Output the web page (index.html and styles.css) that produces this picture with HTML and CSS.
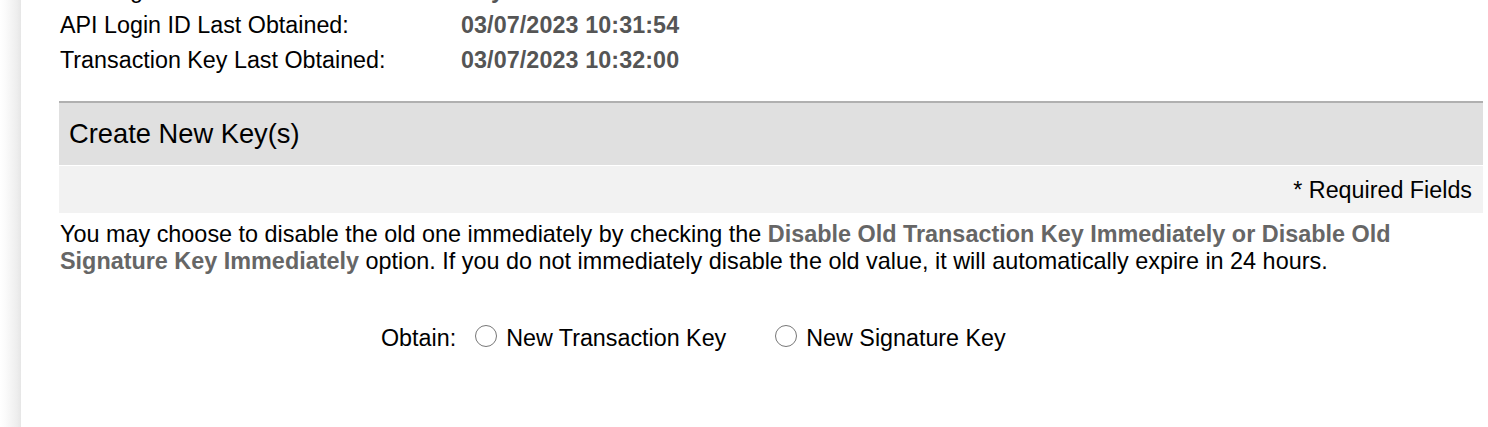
FILE: index.html
```html
<!DOCTYPE html>
<html>
<head>
<meta charset="utf-8">
<link rel="stylesheet" href="styles.css">
</head>
<body>
<div class="page">
  <div class="rail"></div>
  <div class="main">
    <div class="info">
      <div class="label">API Login ID:</div><div class="value">5Ky4Rm8T</div>
      <div class="label">API Login ID Last Obtained:</div><div class="value">03/07/2023 10:31:54</div>
      <div class="label">Transaction Key Last Obtained:</div><div class="value">03/07/2023 10:32:00</div>
    </div>
    <div class="section-head">Create New Key(s)</div>
    <div class="required">* Required Fields</div>
    <p class="note">You may choose to disable the old one immediately by checking the <b>Disable Old Transaction Key Immediately or Disable Old Signature Key Immediately</b> option. If you do not immediately disable the old value, it will automatically expire in 24 hours.</p>
    <div class="obtain">
      <span class="obtain-label">Obtain:</span>
      <label class="opt"><input type="radio" name="obtain" class="radio"><span>New Transaction Key</span></label>
      <label class="opt"><input type="radio" name="obtain" class="radio"><span>New Signature Key</span></label>
    </div>
  </div>
</div>
</body>
</html>
```

FILE: styles.css
```css
html, body {
  margin: 0;
  padding: 0;
  background: #fff;
  overflow: hidden;
}
body {
  font-family: "Liberation Sans", Arial, sans-serif;
  font-size: 23.3px;
  color: #000;
}
.page {
  display: flex;
  height: 427px;
}
.rail {
  width: 21px;
  flex: none;
  background: linear-gradient(to right, #ffffff 0%, #fbfbfb 25%, #eeeeee 80%, #e6e6e6 100%);
}
.main {
  flex: 1;
  padding: 0 5px 0 38px;
}
.info {
  display: grid;
  grid-template-columns: 401px auto;
  line-height: 35px;
  margin-top: -27px;
  padding-left: 1px;
}
.value {
  font-weight: bold;
  font-size: 23.3px;
  letter-spacing: 0.1px;
  color: #555;
}
.section-head {
  margin-top: 23px;
  border-top: 2px solid #b0b0b0;
  background: #e0e0e0;
  height: 62px;
  line-height: 62px;
  font-size: 27.3px;
  padding-left: 10px;
}
.required {
  margin-top: 1px;
  background: #f2f2f2;
  height: 47px;
  line-height: 48px;
  text-align: right;
  padding-right: 11px;
}
.note {
  margin: 8px 0 0 0;
  padding-left: 1px;
  line-height: 27px;
  font-size: 23.4px;
}
.note b {
  color: #666;
}
.obtain {
  display: flex;
  align-items: center;
  margin-top: 46px;
  padding-left: 322px;
  line-height: 35px;
}
.obtain-label {
  margin-right: 19px;
}
.opt {
  display: flex;
  align-items: center;
  margin-right: 49px;
}
.radio {
  appearance: none;
  -webkit-appearance: none;
  width: 22px;
  height: 22px;
  margin: -6px 9px 0 0;
  border: 1.5px solid #777;
  border-radius: 50%;
  background: #fff;
  box-sizing: border-box;
}
```
